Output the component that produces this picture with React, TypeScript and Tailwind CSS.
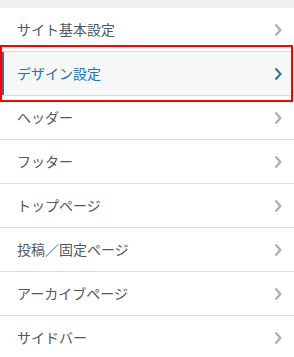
const items = [
  'サイト基本設定',
  'デザイン設定',
  'ヘッダー',
  'フッター',
  'トップページ',
  '投稿／固定ページ',
  'アーカイブページ',
  'サイドバー',
];

const ACTIVE = 1;

function Chevron({ active }: { active: boolean }) {
  return (
    <svg width="10" height="14" viewBox="0 0 10 14" className={active ? 'text-[#2271b1]' : 'text-[#a7aaad]'}>
      <path d="M2.5 1.5 L7.5 7 L2.5 12.5" fill="none" stroke="currentColor" strokeWidth="2" />
    </svg>
  );
}

export default function App() {
  return (
    <div
      className="w-[294px] h-[357px] overflow-hidden bg-white"
      style={{ fontFamily: '"Noto Sans CJK JP", "Noto Sans", sans-serif' }}
    >
      <div className="h-[8px] bg-[#f0f0f1]" />
      <ul className="relative">
        {items.map((label, i) => {
          const active = i === ACTIVE;
          return (
            <li
              key={label}
              className={
                'relative flex items-center justify-between h-[44px] pl-[17px] pr-[11px] border-b border-[#dcdcde] ' +
                (active ? 'bg-[#f6f7f7] text-[#2271b1]' : 'text-[#50575e]')
              }
            >
              {active && <span className="absolute left-0 top-0 bottom-0 w-[4px] bg-[#2271b1]" />}
              <span className="text-[14px] leading-[21px]">{label}</span>
              <Chevron active={active} />
              {active && (
                <span className="absolute left-0 right-[1px] top-[-7px] bottom-[-7px] border-2 border-[#ff0000] pointer-events-none" />
              )}
            </li>
          );
        })}
      </ul>
    </div>
  );
}
